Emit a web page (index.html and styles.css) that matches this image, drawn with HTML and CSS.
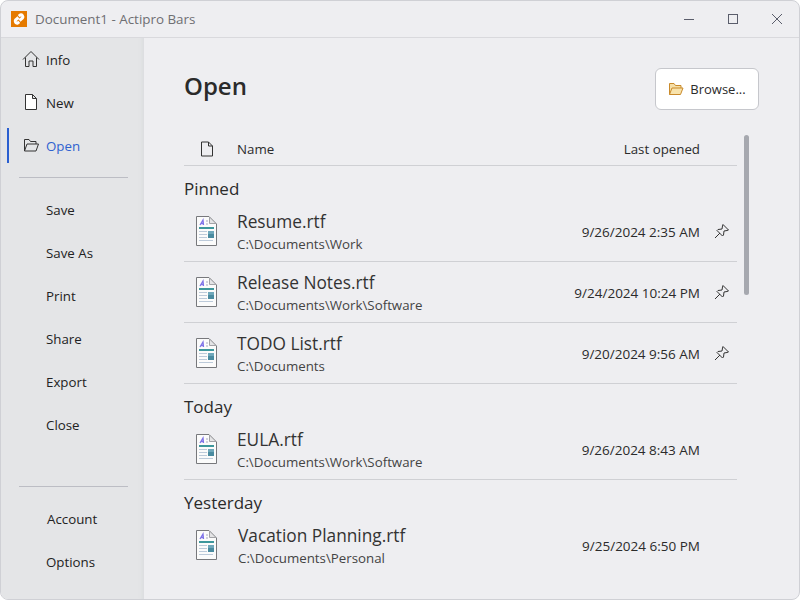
FILE: index.html
```html
<!DOCTYPE html>
<html>
  <head>
    <meta charset="utf-8">
    <title>Document1 - Actipro Bars</title>
    <link rel="stylesheet" href="styles.css">
  </head>
  <body>
    <div class="window">
      <div class="titlebar">
        <svg class="app-icon" width="16" height="16" viewBox="0 0 16 16">
          <rect width="16" height="16" fill="#e57a00"/>
          <path d="M7.5 6.5 L4.5 9 A2 2 0 0 0 6.8 12 L8.3 10.8" stroke="#fff" stroke-width="3" fill="none"/>
          <path d="M8.5 9.5 L11.5 7 A2 2 0 0 0 9.2 4 L7.7 5.2" stroke="#fff" stroke-width="3" fill="none"/>
        </svg>
        <span class="doc-title">Document1 - Actipro Bars</span>
        <div class="caption-buttons">
          <svg width="12" height="12" viewBox="0 0 12 12"><path d="M1 6.5 H11" stroke="#5a5d6b" fill="none"/></svg>
          <svg width="12" height="12" viewBox="0 0 12 12"><rect x="1.5" y="1.5" width="9" height="9" stroke="#5a5d6b" fill="none"/></svg>
          <svg width="12" height="12" viewBox="0 0 12 12"><path d="M1 1 L11 11 M11 1 L1 11" stroke="#5a5d6b" fill="none"/></svg>
        </div>
      </div>

      <div class="content">
        <div class="sidebar">
          <div class="nav-item">
            <svg class="nav-icon" width="18" height="18" viewBox="0 0 18 18"><path d="M1 9.5 L9 1.5 L17 9.5 M3.5 7.5 V16.5 H7 V11 H11 V16.5 H14.5 V7.5" stroke="#333" fill="none"/></svg>
            Info
          </div>
          <div class="nav-item">
            <svg class="nav-icon" width="18" height="18" viewBox="0 0 18 18"><path d="M3.5 1.5 H10.5 L14.5 5.5 V16.5 H3.5 Z M10.5 1.5 V5.5 H14.5" stroke="#333" fill="#fff"/></svg>
            New
          </div>
          <div class="nav-item active">
            <svg class="nav-icon" width="18" height="18" viewBox="0 0 18 18"><path d="M2.5 15 V3.5 H7 L8.5 5.5 H14 V8 M2.5 15 L5 8 H16.5 L14 15 Z" stroke="#333" fill="none"/></svg>
            Open
          </div>
          <div class="nav-sep"></div>
          <div class="nav-item">Save</div>
          <div class="nav-item">Save As</div>
          <div class="nav-item">Print</div>
          <div class="nav-item">Share</div>
          <div class="nav-item">Export</div>
          <div class="nav-item">Close</div>
          <div class="spacer"></div>
          <div class="nav-sep"></div>
          <div class="nav-item account">Account</div>
          <div class="nav-item">Options</div>
        </div>

        <div class="main">
          <div class="main-head">
            <h1>Open</h1>
            <div class="browse">
              <svg width="16" height="14" viewBox="0 0 16 14"><path d="M1.5 12.5 V1.5 H6 L7.5 3.5 H13 V6" stroke="#c98a2b" fill="#f5dfa8"/><path d="M1.5 12.5 L4 6 H15 L12.5 12.5 Z" stroke="#c98a2b" fill="#f8e3ac"/></svg>
              Browse...
            </div>
          </div>

          <div class="col-head">
            <svg width="14" height="16" viewBox="0 0 14 16"><path d="M1.5 1 H8.5 L12.5 5 V15 H1.5 Z M8.5 1 V5 H12.5" stroke="#333" fill="none"/></svg>
            <span class="col-name">Name</span>
            <span class="col-date">Last opened</span>
          </div>

          <div class="group">Pinned</div>
          <div class="file-row line">
            <svg class="doc" width="24" height="32"><use href="#rtf"/></svg>
            <div class="file-text">
              <div class="file-name">Resume.rtf</div>
              <div class="file-path">C:\Documents\Work</div>
            </div>
            <div class="file-date">9/26/2024 2:35 AM</div>
            <svg class="pin" width="16" height="16"><use href="#pin"/></svg>
          </div>
          <div class="file-row line">
            <svg class="doc" width="24" height="32"><use href="#rtf"/></svg>
            <div class="file-text">
              <div class="file-name">Release Notes.rtf</div>
              <div class="file-path">C:\Documents\Work\Software</div>
            </div>
            <div class="file-date">9/24/2024 10:24 PM</div>
            <svg class="pin" width="16" height="16"><use href="#pin"/></svg>
          </div>
          <div class="file-row line">
            <svg class="doc" width="24" height="32"><use href="#rtf"/></svg>
            <div class="file-text">
              <div class="file-name">TODO List.rtf</div>
              <div class="file-path">C:\Documents</div>
            </div>
            <div class="file-date">9/20/2024 9:56 AM</div>
            <svg class="pin" width="16" height="16"><use href="#pin"/></svg>
          </div>

          <div class="group">Today</div>
          <div class="file-row line">
            <svg class="doc" width="24" height="32"><use href="#rtf"/></svg>
            <div class="file-text">
              <div class="file-name">EULA.rtf</div>
              <div class="file-path">C:\Documents\Work\Software</div>
            </div>
            <div class="file-date">9/26/2024 8:43 AM</div>
            <div class="pin"></div>
          </div>

          <div class="group">Yesterday</div>
          <div class="file-row">
            <svg class="doc" width="24" height="32"><use href="#rtf"/></svg>
            <div class="file-text nudge">
              <div class="file-name">Vacation Planning.rtf</div>
              <div class="file-path">C:\Documents\Personal</div>
            </div>
            <div class="file-date">9/25/2024 6:50 PM</div>
            <div class="pin"></div>
          </div>

          <div class="scroll-thumb"></div>
        </div>
      </div>
    </div>

    <!-- shared icons -->
    <svg class="defs" width="0" height="0">
      <symbol id="rtf" viewBox="0 0 24 32">
        <path d="M2.5 1.5 H15 L22.5 9 V30.5 H2.5 Z" fill="#fbfbfb" stroke="#77787c"/>
        <path d="M15.5 2 V8.5 H22 Z" fill="#e4e4e6" stroke="#a2a3a7"/>
        <path d="M6 10 L9 5 L9.5 10 M7 8.5 H10" stroke="#7f73e8" stroke-width="1.3" fill="none"/>
        <path d="M12 6 H14 M12 9 H14" stroke="#a8a8c0"/>
        <rect x="5" y="12" width="15" height="2" fill="#3d979c"/>
        <path d="M5 16.5 H13 M5 19.5 H13 M5 22.5 H13 M5 25.5 H19" stroke="#bccada"/>
        <rect x="14" y="16" width="6" height="3" fill="#6fa8bb"/>
        <rect x="14" y="19" width="6" height="4" fill="#4a8ba0"/>
      </symbol>
      <symbol id="pin" viewBox="0 0 16 16">
        <path d="M1 15 L6 10 M9 1.5 L14.5 7 L13 7.5 L10 8 L9.5 12 L8.5 13 L3 7.5 L4 6.5 L8 6 L8.5 3 Z" stroke="#333" fill="none"/>
      </symbol>
    </svg>
  </body>
</html>
```

FILE: styles.css
```css
html, body {margin:0; padding:0; background:#fff;}
body {font-family:"Open Sans", "Noto Sans", sans-serif; font-size:13.3px; color:#2b2b2b;}

.window {width:798px; height:598px; border:1px solid #cfd0d5; border-radius:8px; overflow:hidden; background:#eeeef1; display:flex; flex-direction:column;}

.titlebar {height:36px; flex:none; display:flex; align-items:center; padding-left:10px; border-bottom:1px solid #d9d9dd;}
.app-icon {margin-right:8px;}
.doc-title {color:#6f6f73; font-size:13.4px;}
.caption-buttons {margin-left:auto; display:flex; gap:32px; padding-right:16px;}

.content {flex:1; display:flex; min-height:0;}

.sidebar {width:143px; flex:none; display:flex; flex-direction:column; padding-bottom:16px; background:#e4e5e7; box-shadow:inset -6px 0 5px -5px #d8d9dc;}
.nav-item {height:43px; flex:none; display:flex; align-items:center; padding-left:45px; position:relative; color:#222;}
.nav-icon {position:absolute; left:21px; top:12px;}
.nav-item.active {color:#2f62d0;}
.nav-item.active::before {content:""; position:absolute; left:6px; top:4px; bottom:4px; width:2px; background:#2a5fd0;}
.nav-item.account {padding-left:46px;}
.nav-sep {height:1px; flex:none; margin:10px 16px 10px 18px; background:#bcbdc4;}
.spacer {flex:1;}

.main {flex:1; position:relative; padding:0 62px 0 40px; min-width:0;}
.main-head {height:90px; display:flex; justify-content:space-between; align-items:flex-start;}
h1 {margin:31px 0 0; font-size:24px; line-height:34px; font-weight:600; color:#2b2b2b;}
.browse {margin:30px -22px 0 0; width:102px; height:40px; display:flex; align-items:center; justify-content:center; gap:6px; background:#fff; border:1px solid #c6c7cc; border-radius:6px; font-size:13px;}

.col-head {height:33px; display:flex; align-items:center; border-bottom:1px solid #cfd0d4; padding-top:4px;}
.col-head svg {margin-left:16px;}
.col-name {margin-left:23px;}
.col-date {margin-left:auto; margin-right:37px;}

.group {height:35px; display:flex; align-items:flex-end; font-size:17px; line-height:24px;}

.file-row {height:60px; display:flex; align-items:center; position:relative;}
.line {border-bottom:1px solid #cfd0d4;}
.doc {margin-left:10px; margin-right:19px;}
.file-text {flex:1; min-width:0; margin-top:2px;}
.nudge {padding-left:1px;}
.file-name {font-size:17.3px; line-height:24px; color:#333;}
.file-path {font-size:13.3px; line-height:20px; color:#444;}
.file-date {margin:1px 14px 0 0; font-size:13.5px;}
.pin {width:16px; height:16px; margin-right:7px;}

.scroll-thumb {position:absolute; left:600px; top:97px; width:5px; height:160px; border-radius:3px; background:#a6a8af;}

.defs {position:absolute;}
```
